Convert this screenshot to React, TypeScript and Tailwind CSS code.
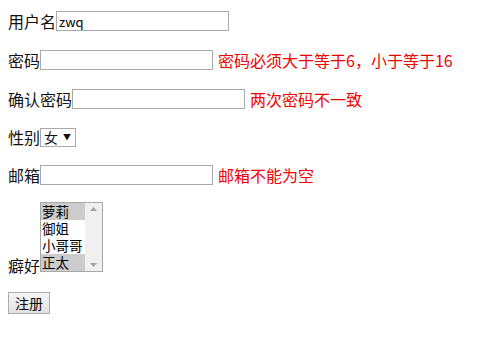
import React from "react";

const font = { fontFamily: '"Microsoft YaHei", "Noto Sans CJK SC", "Liberation Sans", sans-serif' };

const Field = ({ w = "w-[173px]", value = "" }: { w?: string; value?: string }) => (
  <div className={`${w} h-5 border border-[#a9a9a9] bg-white flex items-center px-[2px] text-[13px] leading-none text-black`}>
    {value}
  </div>
);

const Err = ({ children }: { children: React.ReactNode }) => (
  <span className="ml-[5px] text-[16px] text-[#f20000]">{children}</span>
);

const Opt = ({ label, sel = false }: { label: string; sel?: boolean }) => (
  <div className={`${sel ? "bg-[#cccccc]" : ""} pl-[1px] h-[17px] flex items-center leading-none`}>{label}</div>
);

export default function App() {
  return (
    <div className="min-h-[345px] w-[484px] bg-white pl-2 pt-[11px] text-[16px] text-[#111]" style={font}>
      {/* 用户名 */}
      <div className="flex items-center h-5">
        <span>用户名</span>
        <Field value="zwq" />
      </div>

      {/* 密码 */}
      <div className="flex items-center h-5 mt-[19px]">
        <span>密码</span>
        <Field />
        <Err>密码必须大于等于6，小于等于16</Err>
      </div>

      {/* 确认密码 */}
      <div className="flex items-center h-5 mt-[19px]">
        <span>确认密码</span>
        <Field />
        <Err>两次密码不一致</Err>
      </div>

      {/* 性别 */}
      <div className="flex items-center h-5 mt-[18px]">
        <span>性别</span>
        <div className="w-[36px] h-[19px] border border-[#a9a9a9] bg-white flex items-center pl-[3px] text-[14px] leading-none">
          <span>女</span>
          <span className="ml-[5px] text-[8px]">▼</span>
        </div>
      </div>

      {/* 邮箱 */}
      <div className="flex items-center h-5 mt-[18px]">
        <span>邮箱</span>
        <Field />
        <Err>邮箱不能为空</Err>
      </div>

      {/* 癖好 */}
      <div className="flex items-end mt-[17px]">
        <span className="leading-[18px] mb-[-2px]">癖好</span>
        <div className="w-[63px] h-[70px] border border-[#a9a9a9] bg-white flex text-[13.5px] text-black">
          <div className="flex-1 flex flex-col">
            <Opt label="萝莉" sel />
            <Opt label="御姐" />
            <Opt label="小哥哥" />
            <Opt label="正太" sel />
          </div>
          <div className="w-[17px] bg-[#f0f0f0] flex flex-col justify-between items-center py-[4px]">
            <svg width="7" height="4" viewBox="0 0 7 4"><path d="M0 4 L3.5 0 L7 4 Z" fill="#a3a3a3" /></svg>
            <svg width="7" height="4" viewBox="0 0 7 4"><path d="M0 0 L3.5 4 L7 0 Z" fill="#a3a3a3" /></svg>
          </div>
        </div>
      </div>

      {/* 注册 */}
      <button className="mt-[20px] w-[42px] h-[22px] border border-[#adadad] bg-gradient-to-b from-[#f6f6f6] to-[#e2e2e2] text-[14px] leading-none text-black flex items-center justify-center">
        注册
      </button>
    </div>
  );
}
